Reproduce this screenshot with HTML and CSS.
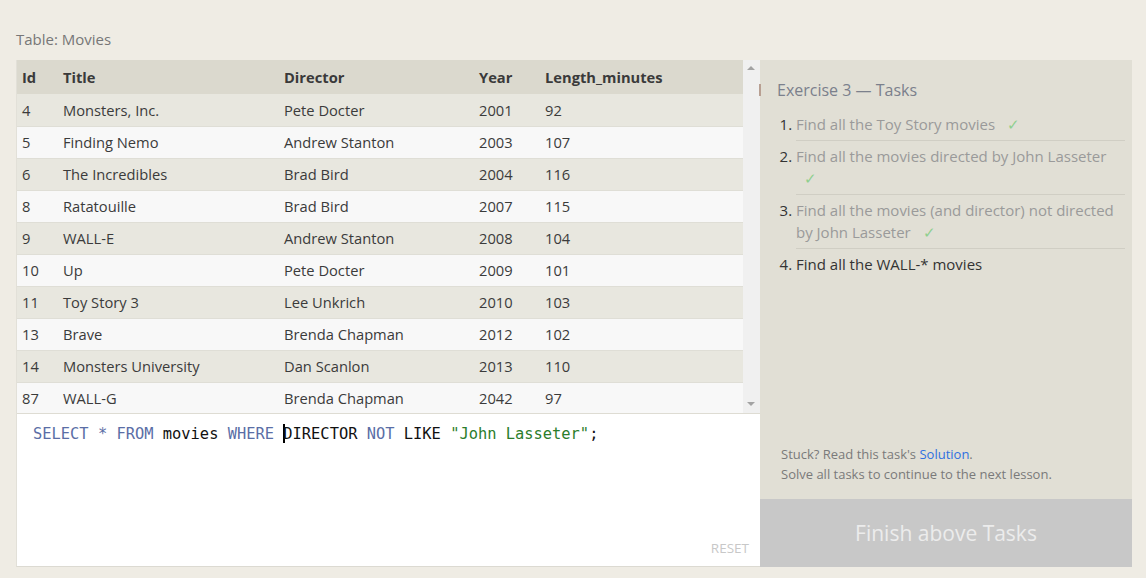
FILE: index.html
```html
<!DOCTYPE html>
<html>
<head>
<meta charset="utf-8">
<link rel="stylesheet" href="styles.css">
</head>
<body>
<div class="page">
  <div class="caption">Table: Movies</div>
  <div class="workspace">
    <div class="left">
      <div class="table-area">
        <div class="table-scroll">
          <table class="movies">
            <colgroup>
              <col class="c-id"><col class="c-title"><col class="c-dir"><col class="c-year"><col>
            </colgroup>
            <thead>
              <tr><th>Id</th><th>Title</th><th>Director</th><th>Year</th><th>Length_minutes</th></tr>
            </thead>
            <tbody>
              <tr><td>4</td><td>Monsters, Inc.</td><td>Pete Docter</td><td>2001</td><td>92</td></tr>
              <tr><td>5</td><td>Finding Nemo</td><td>Andrew Stanton</td><td>2003</td><td>107</td></tr>
              <tr><td>6</td><td>The Incredibles</td><td>Brad Bird</td><td>2004</td><td>116</td></tr>
              <tr><td>8</td><td>Ratatouille</td><td>Brad Bird</td><td>2007</td><td>115</td></tr>
              <tr><td>9</td><td>WALL-E</td><td>Andrew Stanton</td><td>2008</td><td>104</td></tr>
              <tr><td>10</td><td>Up</td><td>Pete Docter</td><td>2009</td><td>101</td></tr>
              <tr><td>11</td><td>Toy Story 3</td><td>Lee Unkrich</td><td>2010</td><td>103</td></tr>
              <tr><td>13</td><td>Brave</td><td>Brenda Chapman</td><td>2012</td><td>102</td></tr>
              <tr><td>14</td><td>Monsters University</td><td>Dan Scanlon</td><td>2013</td><td>110</td></tr>
              <tr><td>87</td><td>WALL-G</td><td>Brenda Chapman</td><td>2042</td><td>97</td></tr>
            </tbody>
          </table>
        </div>
        <div class="scrollbar">
          <span class="arrow-up"></span>
          <span class="arrow-down"></span>
        </div>
      </div>
      <div class="editor">
        <div class="code"><span class="kw">SELECT</span> <span class="kw">*</span> <span class="kw">FROM</span> movies <span class="kw">WHERE</span> <span class="cursor"></span>DIRECTOR <span class="kw">NOT</span> LIKE <span class="str">"John Lasseter"</span>;</div>
        <div class="reset">RESET</div>
      </div>
    </div>
    <div class="right">
      <span class="handle"></span>
      <div class="tasks">
        <div class="tasks-title">Exercise 3 — Tasks</div>
        <ol class="task-list">
          <li class="done"><span class="task-text">Find all the Toy Story movies <span class="check">✓</span></span></li>
          <li class="done"><span class="task-text">Find all the movies directed by John Lasseter <span class="check">✓</span></span></li>
          <li class="done"><span class="task-text">Find all the movies (and director) not directed by John Lasseter <span class="check">✓</span></span></li>
          <li class="todo"><span class="task-text">Find all the WALL-* movies</span></li>
        </ol>
      </div>
      <div class="help">
        <p>Stuck? Read this task's <a class="link" href="#">Solution</a>.</p>
        <p>Solve all tasks to continue to the next lesson.</p>
      </div>
      <div class="finish">Finish above Tasks</div>
    </div>
  </div>
</div>
</body>
</html>
```

FILE: styles.css
```css
html, body {
  margin: 0;
  padding: 0;
  background: #efece4;
  font-family: "Open Sans", "Noto Sans", sans-serif;
  color: #333;
}

.page {
  padding: 29px 14px 0 16px;
}

.caption {
  font-size: 15px;
  line-height: 20px;
  color: #777;
  height: 21px;
}

.workspace {
  margin-top: 10px;
  display: flex;
  height: 507px;
}

.left {
  width: 744px;
  display: flex;
  flex-direction: column;
  background: #fff;
  box-sizing: border-box;
  border-bottom: 1px solid #dcdad2;
  border-left: 1px solid #e2e0d8;
}

.table-area {
  display: flex;
  height: 354px;
  border-bottom: 1px solid #dedcd3;
  box-sizing: border-box;
}

.table-scroll {
  flex: 1;
  overflow: hidden;
}

.movies {
  width: 100%;
  table-layout: fixed;
  border-collapse: collapse;
  font-size: 14.7px;
}

.c-id { width: 41px; }
.c-title { width: 221px; }
.c-dir { width: 195px; }
.c-year { width: 66px; }

.movies th {
  text-align: left;
  font-weight: 700;
  height: 34px;
  padding: 0 5px;
  background: #dbd9ce;
  color: #3a3a3a;
  box-sizing: border-box;
}

.movies td {
  height: 32px;
  padding: 0 5px;
  box-sizing: border-box;
  border-bottom: 1px solid #dfded6;
  color: #3b3b3b;
  white-space: nowrap;
}

.movies tbody tr:nth-child(odd) td {
  background: #e8e7df;
}

.movies tbody tr:nth-child(even) td {
  background: #f8f8f8;
}

.movies tbody tr:last-child td {
  border-bottom: none;
}

.scrollbar {
  width: 17px;
  background: #f0f0f0;
  position: relative;
}

.arrow-up {
  position: absolute;
  top: 6px;
  left: 4px;
  width: 0;
  height: 0;
  border-left: 4px solid transparent;
  border-right: 4px solid transparent;
  border-bottom: 4px solid #a3a3a3;
}

.arrow-down {
  position: absolute;
  bottom: 7px;
  left: 4px;
  width: 0;
  height: 0;
  border-left: 4px solid transparent;
  border-right: 4px solid transparent;
  border-top: 4px solid #a3a3a3;
}

.editor {
  flex: 1;
  display: flex;
  flex-direction: column;
  justify-content: space-between;
  padding: 10px 12px 9px 16px;
}

.code {
  font-family: "DejaVu Sans Mono", monospace;
  font-size: 15.4px;
  line-height: 20px;
  color: #111;
  white-space: pre;
}

.kw { color: #5a6ea6; }
.str { color: #2b7d2b; }

.cursor {
  display: inline-block;
  width: 2px;
  height: 19px;
  margin-right: -2px;
  background: #000;
  vertical-align: -4px;
}

.reset {
  align-self: flex-end;
  font-size: 13.5px;
  color: #c8c8c8;
  margin-right: -1px;
}

.right {
  width: 372px;
  background: #e1dfd5;
  display: flex;
  flex-direction: column;
  position: relative;
}

.handle {
  position: absolute;
  left: -1px;
  top: 24px;
  width: 2px;
  height: 12px;
  background: #b89f92;
}

.tasks {
  flex: 1;
  padding: 18px 7px 0 17px;
}

.tasks-title {
  font-size: 16px;
  line-height: 24px;
  color: #7b808c;
}

.task-list {
  margin: 7px 0 0 0;
  padding: 0 0 0 19px;
  font-size: 15px;
  line-height: 22.5px;
}

.task-list li {
  color: #333;
}

.task-list li::marker {
  color: #333;
}

.task-text {
  display: block;
  padding: 4px 0 4px 0;
  border-bottom: 1px solid #d0cec4;
}

.task-list li:last-child .task-text {
  border-bottom: none;
}

.done .task-text {
  color: #9a9a9a;
}

.check {
  color: #8fcf8f;
  margin-left: 8px;
}

.help {
  padding: 0 20px 15px 21px;
  font-size: 13px;
  line-height: 20px;
  color: #7a7a7a;
}

.help p {
  margin: 0;
}

.link {
  color: #2f6fe0;
  text-decoration: none;
}

.finish {
  height: 68px;
  background: #c8c8c8;
  color: #ececec;
  font-size: 21px;
  display: flex;
  align-items: center;
  justify-content: center;
}
```
